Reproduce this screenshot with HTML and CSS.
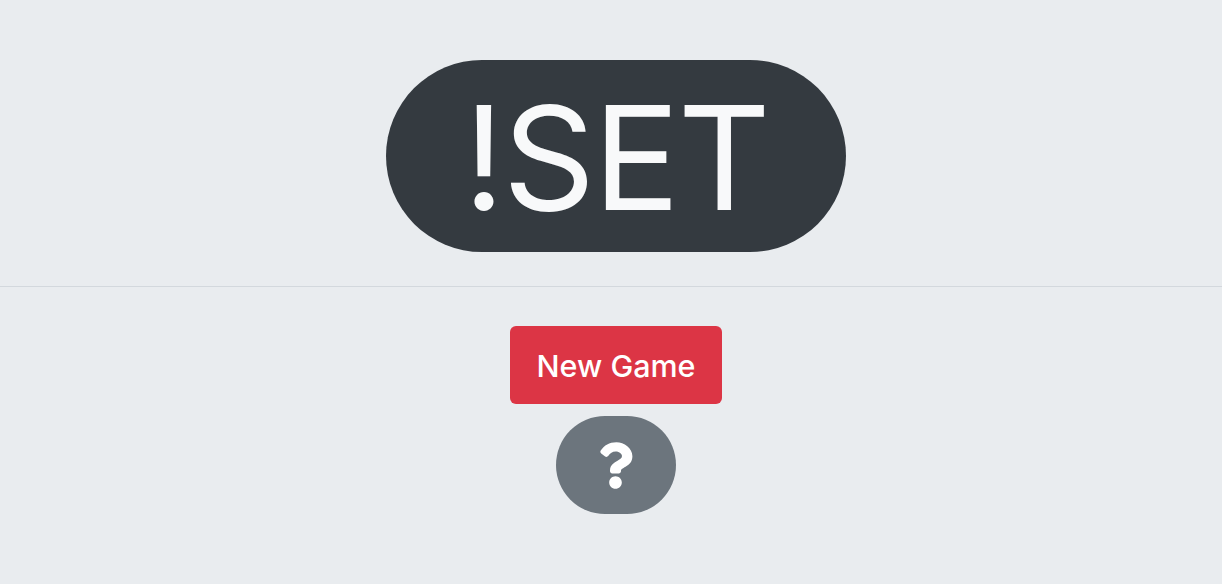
FILE: index.html
```html
<!DOCTYPE html>
<html lang="en">
<head>
<meta charset="utf-8">
<title>!SET</title>
<link rel="stylesheet" href="styles.css">
</head>
<body>
<header class="header">
  <h1 class="logo">!SET</h1>
</header>
<main class="controls">
  <button class="btn btn-new" type="button">New Game</button>
  <button class="btn btn-help" type="button" aria-label="Help">
    <svg class="help-icon" viewBox="0 0 384 512" aria-hidden="true"><path fill="currentColor" d="M202.021 0C122.202 0 70.503 32.703 29.914 91.026c-7.363 10.58-5.093 25.086 5.178 32.874l43.138 32.709c10.373 7.865 25.132 6.026 33.253-4.148 25.049-31.381 43.63-49.449 82.757-49.449 30.764 0 68.816 19.799 68.816 49.631 0 22.552-18.617 34.134-48.993 51.164-35.423 19.86-82.299 44.576-82.299 106.405V320c0 13.255 10.745 24 24 24h72.471c13.255 0 24-10.745 24-24v-5.773c0-42.86 125.268-44.645 125.268-160.627C377.504 66.256 286.902 0 202.021 0zM192 373.459c-38.196 0-69.271 31.075-69.271 69.271 0 38.195 31.075 69.27 69.271 69.27s69.271-31.075 69.271-69.271-31.075-69.27-69.271-69.27z"/></svg>
  </button>
</main>
</body>
</html>
```
FILE: styles.css
```css
html, body {
  margin: 0;
  padding: 0;
}
body {
  background: #e9ecef;
  font-family: Inter, "Noto Sans", sans-serif;
  min-height: 584px;
}
.header {
  display: flex;
  justify-content: center;
  padding: 60px 0 34px 10px;
  border-bottom: 1px solid #d3d8dd;
}
.logo {
  margin: 0;
  width: 460px;
  height: 192px;
  border-radius: 96px;
  background: #343a40;
  color: #f8f9fa;
  display: flex;
  align-items: center;
  justify-content: center;
  font-size: 144px;
  font-weight: 400;
  line-height: 1;
  letter-spacing: -2px;
  padding-top: 4px;
  box-sizing: border-box;
}
.controls {
  display: flex;
  flex-direction: column;
  align-items: center;
  gap: 12px;
  padding: 39px 0 0 10px;
}
.btn {
  border: none;
  font-family: inherit;
  color: #fff;
  cursor: pointer;
  display: flex;
  align-items: center;
  justify-content: center;
}
.btn-new {
  width: 212px;
  height: 78px;
  border-radius: 6px;
  background: #dc3545;
  font-size: 30.5px;
  font-weight: 500;
}
.btn-help {
  width: 120px;
  height: 98px;
  border-radius: 49px;
  background: #6c757d;
}
.help-icon {
  width: 35px;
  height: 47px;
  margin-left: -1px;
}
```
